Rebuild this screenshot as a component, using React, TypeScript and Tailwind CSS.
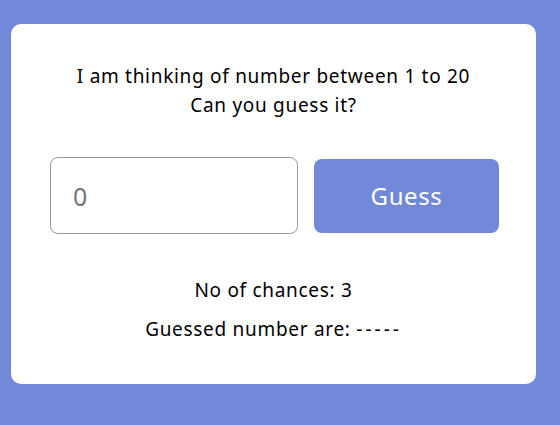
const App = () => {
  return (
    <div className="min-h-screen bg-[#7289da] pt-6 font-['Noto_Sans',sans-serif]">
      <div className="ml-[11px] flex h-[360px] w-[525px] flex-col items-center rounded-[10px] bg-white pt-[38px]">
        <p className="text-center text-[19px] leading-[29px] tracking-[0.7px] text-black">
          I am thinking of number between 1 to 20
          <br />
          Can you guess it?
        </p>

        <div className="mt-[37px] flex w-full items-center gap-4 pl-[39px]">
          <input
            type="text"
            placeholder="0"
            className="h-[77px] w-[248px] rounded-lg border border-[#999] px-[22px] text-[25px] text-[#777] outline-none placeholder:text-[#777]"
          />
          <button className="h-[74px] w-[185px] rounded-lg bg-[#7289da] text-[24px] tracking-[0.6px] text-white">
            Guess
          </button>
        </div>

        <p className="mt-[42px] text-[19px] leading-[28px] tracking-[0.7px] text-black">No of chances: 3</p>
        <p className="mt-[11px] text-[19px] leading-[28px] tracking-[0.7px] text-black">
          Guessed number are: <span className="tracking-[3px]">-----</span>
        </p>
      </div>
    </div>
  );
};

export default App;
